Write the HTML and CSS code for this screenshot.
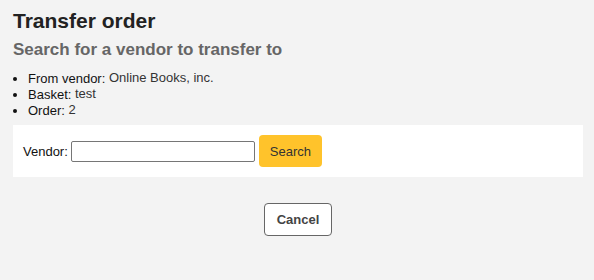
FILE: index.html
```html
<!DOCTYPE html>
<html lang="en">
<head>
    <meta charset="UTF-8">
    <title>Transfer order</title>
    <link rel="stylesheet" href="styles.css">
</head>
<body>
    <div class="main">
        <h1>Transfer order</h1>
        <h2>Search for a vendor to transfer to</h2>
        <ul class="details">
            <li><span class="label">From vendor: </span><span class="value">Online Books, inc.</span></li>
            <li><span class="label">Basket: </span><span class="value">test</span></li>
            <li><span class="label">Order: </span><span class="value">2</span></li>
        </ul>
        <form class="search-box">
            <label for="vendor">Vendor:</label>
            <input type="text" id="vendor">
            <button type="button" class="btn-search">Search</button>
        </form>
        <div class="actions">
            <button type="button" class="btn-cancel">Cancel</button>
        </div>
    </div>
</body>
</html>
```

FILE: styles.css
```css
body {
    margin: 0;
    background-color: #f3f3f3;
    font-family: "Liberation Sans", Arial, sans-serif;
    font-size: 13px;
    color: #111;
}
.main {
    padding: 9px 11px 0 13px;
}
h1 {
    margin: 0;
    font-size: 21px;
    line-height: 24px;
    font-weight: bold;
    color: #222;
}
h2 {
    margin: 7px 0 0 0;
    font-size: 17px;
    line-height: 20px;
    font-weight: bold;
    color: #666;
}
.details {
    margin: 11px 0 0 0;
    padding-left: 15px;
    line-height: 16px;
}
.details .value {
    color: #333;
    line-height: 1;
    vertical-align: 1px;
}
.search-box {
    margin-top: 6px;
    background-color: #fff;
    display: flex;
    align-items: center;
    padding: 10px 10px;
    height: 32px;
}
.search-box label {
    margin-right: 3px;
}
.search-box input {
    width: 180px;
    height: 17px;
    padding: 1px;
    border: 1px solid #767676;
    border-radius: 2px;
    margin: 0 4px 0 0;
    font-family: inherit;
}
.btn-search {
    height: 32px;
    padding: 0 11px;
    border: none;
    border-radius: 4px;
    background-color: #ffc32b;
    color: #333;
    font-family: inherit;
    font-size: 13px;
}
.actions {
    display: flex;
    justify-content: center;
    margin-top: 26px;
}
.btn-cancel {
    height: 33px;
    padding: 0 12px;
    border: 1px solid #666;
    border-radius: 4px;
    background-color: #fff;
    color: #444;
    font-family: inherit;
    font-size: 13px;
    font-weight: bold;
}
```
